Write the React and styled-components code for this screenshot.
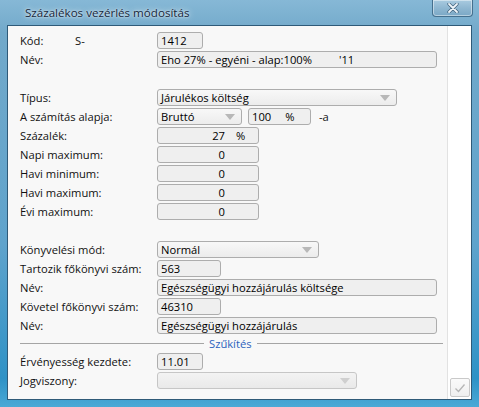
import styled, { createGlobalStyle } from "styled-components"

const Global = createGlobalStyle`
    html, body {
        margin: 0;
        padding: 0;
        background: #ffffff;
    }
    body {
        font-family: "Open Sans", "Noto Sans", "DejaVu Sans", sans-serif;
        font-size: 11.2px;
        color: #111;
    }
`

const Window = styled.div`
    width: 479px;
    height: 407px;
    box-sizing: border-box;
    padding: 0 7px 7px 7px;
    display: flex;
    flex-direction: column;
    background: linear-gradient(180deg, #86b8d6 0%, #72a9ca 8%, #5fa3cc 60%, #2f92c6 93%, #4aa9d6 100%);
    overflow: hidden;
`
const TitleBar = styled.div`
    height: 25px;
    display: flex;
    align-items: flex-start;
    padding-left: 18px;
    margin-right: -1px;
`
const Title = styled.div`
    margin-top: 5px;
    font-size: 11.6px;
    color: #15263a;
    text-shadow: 0 0 6px rgba(255, 255, 255, 0.9), 0 0 2px rgba(255, 255, 255, 0.8);
`
const CloseButton = styled.div`
    margin-left: auto;
    width: 41px;
    height: 17px;
    box-sizing: border-box;
    border: 1px solid #45708e;
    border-top: none;
    border-radius: 0 0 4px 4px;
    background: linear-gradient(180deg, #a9cbe0 0%, #8fb7d1 50%, #7aa8c6 100%);
    box-shadow: inset 0 0 0 1px rgba(255, 255, 255, 0.45);
    display: flex;
    align-items: center;
    justify-content: center;
`
const Client = styled.div`
    flex: 1;
    display: flex;
    border: 1px solid #2f5a78;
    background: #fff;
`
const Panel = styled.div`
    flex: 1;
    background: #f8f8f8;
    border-right: 1px solid #e2e2e2;
    padding: 5px 4px 0 12px;
    display: flex;
    flex-direction: column;
`
const Side = styled.div`
    width: 23px;
    display: flex;
    flex-direction: column;
    justify-content: flex-end;
    align-items: center;
    padding-bottom: 2px;
    box-sizing: border-box;
`
const CheckButton = styled.div`
    width: 20px;
    height: 19px;
    box-sizing: border-box;
    border: 1px solid #c9c9c9;
    border-radius: 2px;
    background: linear-gradient(180deg, #fafafa, #efefef);
    display: flex;
    align-items: center;
    justify-content: center;
`
const Row = styled.div`
    display: grid;
    grid-template-columns: 137px auto;
    align-items: center;
    height: 19px;
    margin-top: ${(p) => p.$gap || 0}px;
`
const Label = styled.div`
    display: flex;
    white-space: nowrap;
`
const LabelMain = styled.span`
    width: 55px;
`
const Fields = styled.div`
    display: flex;
    align-items: center;
    gap: 6px;
`
const Field = styled.div`
    width: ${(p) => p.$w}px;
    height: 17px;
    box-sizing: border-box;
    border: 1px solid #adadad;
    border-radius: 3px;
    background: #efefef;
    display: flex;
    align-items: center;
    padding: 0 3px;
    white-space: nowrap;
    overflow: hidden;
    color: #000;
`
const NumValue = styled.span`
    width: 64px;
    text-align: right;
`
const Suffix = styled.span`
    margin-left: ${(p) => p.$m}px;
`
const Select = styled.div`
    width: ${(p) => p.$w}px;
    height: 17px;
    box-sizing: border-box;
    border: 1px solid ${(p) => (p.$disabled ? "#c6c6c6" : "#adadad")};
    border-radius: 3px;
    background: ${(p) => (p.$disabled ? "linear-gradient(180deg, #f3f3f3, #e9e9e9)" : "linear-gradient(180deg, #f8f8f8, #ececec)")};
    display: flex;
    align-items: center;
    padding: 0 6px 0 3px;
    color: #000;
`
const SelectText = styled.span`
    flex: 1;
`
const Arrow = styled.span`
    width: 0;
    height: 0;
    border-left: 5px solid transparent;
    border-right: 5px solid transparent;
    border-top: 6px solid ${(p) => (p.$disabled ? "#cfcfcf" : "#b8b8b8")};
`
const Note = styled.span`
    margin-left: 2px;
`
const Separator = styled.div`
    display: flex;
    align-items: center;
    gap: 5px;
    height: 17px;
`
const SepLine = styled.div`
    height: 1px;
    background: #a5a5a5;
    flex: ${(p) => (p.$fixed ? "0 0 184px" : "1")};
`
const SepText = styled.span`
    color: #2b62bd;
`

function Dropdown({ w, text, disabled }) {
    return (
        <Select $w={w} $disabled={disabled}>
            <SelectText>{text}</SelectText>
            <Arrow $disabled={disabled} />
        </Select>
    )
}

function NumRow({ label, value, suffix }) {
    return (
        <Row>
            <Label>{label}</Label>
            <Fields>
                <Field $w={102}>
                    <NumValue>{value}</NumValue>
                    {suffix && <Suffix $m={11}>{suffix}</Suffix>}
                </Field>
            </Fields>
        </Row>
    )
}

export default function App() {
    return (
        <>
            <Global />
            <Window>
                <TitleBar>
                    <Title>Százalékos vezérlés módosítás</Title>
                    <CloseButton>
                        <svg width="12" height="10" viewBox="0 0 12 10">
                            <path d="M2 1 L10 9 M10 1 L2 9" stroke="#3f5f78" strokeWidth="3.2" strokeLinecap="round" />
                            <path d="M2 1 L10 9 M10 1 L2 9" stroke="#eef5fa" strokeWidth="1.8" strokeLinecap="round" />
                        </svg>
                    </CloseButton>
                </TitleBar>
                <Client>
                    <Panel>
                        <Row>
                            <Label>
                                <LabelMain>Kód:</LabelMain>
                                <span>S-</span>
                            </Label>
                            <Fields>
                                <Field $w={46}>1412</Field>
                            </Fields>
                        </Row>
                        <Row>
                            <Label>Név:</Label>
                            <Fields>
                                <Field $w={280}>
                                    Eho 27% - egyéni - alap:100%
                                    <Suffix $m={27}>'11</Suffix>
                                </Field>
                            </Fields>
                        </Row>

                        <Row $gap={19}>
                            <Label>Típus:</Label>
                            <Fields>
                                <Dropdown w={240} text="Járulékos költség" />
                            </Fields>
                        </Row>
                        <Row>
                            <Label>A számítás alapja:</Label>
                            <Fields>
                                <Dropdown w={85} text="Bruttó" />
                                <Field $w={63}>
                                    100
                                    <Suffix $m={14}>%</Suffix>
                                </Field>
                                <Note>-a</Note>
                            </Fields>
                        </Row>
                        <NumRow label="Százalék:" value="27" suffix="%" />
                        <NumRow label="Napi maximum:" value="0" />
                        <NumRow label="Havi minimum:" value="0" />
                        <NumRow label="Havi maximum:" value="0" />
                        <NumRow label="Évi maximum:" value="0" />

                        <Row $gap={19}>
                            <Label>Könyvelési mód:</Label>
                            <Fields>
                                <Dropdown w={162} text="Normál" />
                            </Fields>
                        </Row>
                        <Row>
                            <Label>Tartozik főkönyvi szám:</Label>
                            <Fields>
                                <Field $w={64}>563</Field>
                            </Fields>
                        </Row>
                        <Row>
                            <Label>Név:</Label>
                            <Fields>
                                <Field $w={280}>Egészségügyi hozzájárulás költsége</Field>
                            </Fields>
                        </Row>
                        <Row>
                            <Label>Követel főkönyvi szám:</Label>
                            <Fields>
                                <Field $w={64}>46310</Field>
                            </Fields>
                        </Row>
                        <Row>
                            <Label>Név:</Label>
                            <Fields>
                                <Field $w={280}>Egészségügyi hozzájárulás</Field>
                            </Fields>
                        </Row>

                        <Separator>
                            <SepLine $fixed />
                            <SepText>Szűkítés</SepText>
                            <SepLine />
                        </Separator>

                        <Row>
                            <Label>Érvényesség kezdete:</Label>
                            <Fields>
                                <Field $w={46}>11.01</Field>
                            </Fields>
                        </Row>
                        <Row>
                            <Label>Jogviszony:</Label>
                            <Fields>
                                <Dropdown w={200} text="" disabled />
                            </Fields>
                        </Row>
                    </Panel>
                    <Side>
                        <CheckButton>
                            <svg width="12" height="10" viewBox="0 0 12 10">
                                <path d="M1.5 5.5 L4.5 8.5 L10.5 1.5" fill="none" stroke="#b5b5b5" strokeWidth="1.3" />
                            </svg>
                        </CheckButton>
                    </Side>
                </Client>
            </Window>
        </>
    )
}
